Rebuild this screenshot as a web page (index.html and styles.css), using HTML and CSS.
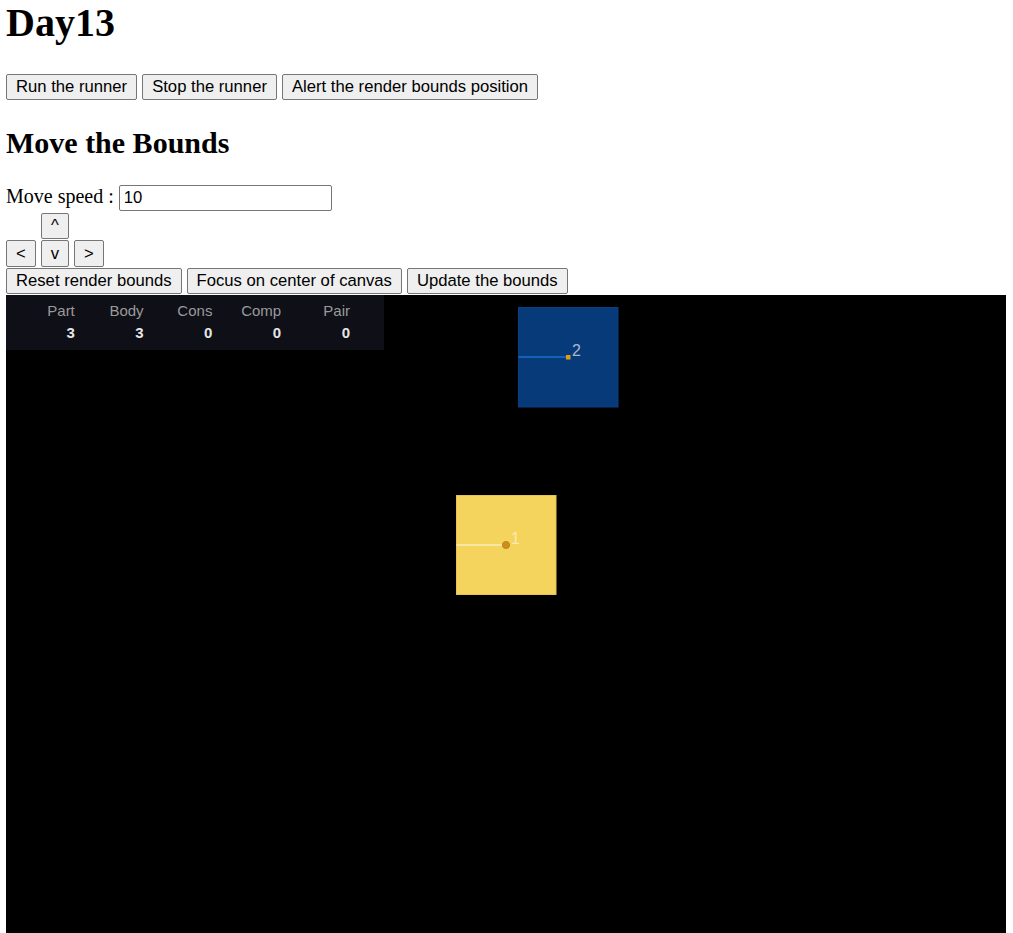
FILE: index.html
```html
<!DOCTYPE html>
<html>
<head>
<meta charset="utf-8">
<title>Day13</title>
<link rel="stylesheet" href="styles.css">
</head>
<body>
<h1 class="title">Day13</h1>
<div class="btn-row top-row">
  <button class="btn">Run the runner</button>
  <button class="btn">Stop the runner</button>
  <button class="btn">Alert the render bounds position</button>
</div>
<h2 class="subtitle">Move the Bounds</h2>
<div class="speed-row">
  <label class="speed-label" for="speed">Move speed :</label>
  <input class="speed-input" id="speed" type="text" value="10">
</div>
<div class="btn-row arrow-row up-row">
  <button class="btn">^</button>
</div>
<div class="btn-row arrow-row">
  <button class="btn">&lt;</button>
  <button class="btn">v</button>
  <button class="btn">&gt;</button>
</div>
<div class="btn-row arrow-row">
  <button class="btn">Reset render bounds</button>
  <button class="btn">Focus on center of canvas</button>
  <button class="btn">Update the bounds</button>
</div>
<div class="canvas">
  <div class="stats">
    <span class="stat-label">Part</span>
    <span class="stat-label">Body</span>
    <span class="stat-label">Cons</span>
    <span class="stat-label">Comp</span>
    <span class="stat-label">Pair</span>
    <span class="stat-value">3</span>
    <span class="stat-value">3</span>
    <span class="stat-value">0</span>
    <span class="stat-value">0</span>
    <span class="stat-value">0</span>
  </div>
  <svg class="world" width="1000" height="638" viewBox="0 0 1000 638">
    <rect x="512.5" y="12.5" width="99.5" height="99.5" fill="#073a79" stroke="#0a3f82" stroke-width="1"/>
    <line x1="512.5" y1="62" x2="562" y2="62" stroke="#1660bc" stroke-width="2"/>
    <rect x="560" y="60" width="4.5" height="4.5" fill="#e29b12"/>
    <text x="566" y="61" class="label-blue">2</text>
    <rect x="450.5" y="200.5" width="99.5" height="99" fill="#f5d45e" stroke="#e6c453" stroke-width="1"/>
    <line x1="450.5" y1="250" x2="500" y2="250" stroke="#f9e6a3" stroke-width="2"/>
    <circle cx="500" cy="250" r="3.6" fill="#d08f12" stroke="#b8892a" stroke-width="1"/>
    <text x="505" y="249" class="label-yellow">1</text>
  </svg>
</div>
</body>
</html>
```
FILE: styles.css
```css
html, body {
  overflow: hidden;
}
body {
  margin: 0 6px;
  font-family: "Liberation Serif", "Times New Roman", serif;
  font-size: 20px;
  color: #000;
  background: #fff;
}
.title {
  font-size: 40px;
  line-height: 46px;
  font-weight: bold;
  margin: 0 0 28px 0;
}
.subtitle {
  font-size: 30px;
  line-height: 35px;
  font-weight: bold;
  margin: 25px 0 25px 0;
}
.btn-row {
  display: flex;
  align-items: flex-start;
  gap: 5px;
}
.top-row {
  height: 26px;
}
.arrow-row {
  height: 27.5px;
}
.up-row {
  padding-left: 35px;
}
.btn {
  height: 26.5px;
  margin: 0;
  padding: 0 9px;
  border: 1px solid #767676;
  border-radius: 2px;
  background: #efefef;
  color: #000;
  font-family: "Liberation Sans", Arial, sans-serif;
  font-size: 16.67px;
  line-height: 19px;
  white-space: nowrap;
}
.top-row .btn {
  height: 26px;
  padding-bottom: 1px;
}
.speed-row {
  display: flex;
  align-items: baseline;
  gap: 5px;
  height: 27.5px;
}
.speed-label {
  line-height: 23px;
}
.speed-input {
  width: 213px;
  height: 26px;
  box-sizing: border-box;
  margin: 0;
  padding: 0 4px;
  border: 1px solid #767676;
  border-radius: 2px;
  font-family: "Liberation Sans", Arial, sans-serif;
  font-size: 16.67px;
  color: #000;
  background: #fff;
}
.canvas {
  position: relative;
  width: 1000px;
  height: 638px;
  background: #000;
}
.stats {
  position: absolute;
  left: 0;
  top: 0;
  width: 378px;
  height: 55px;
  box-sizing: border-box;
  padding-top: 7px;
  background: #0e0f17;
  display: grid;
  grid-template-columns: repeat(5, 68.8px);
  grid-template-rows: 18px 18px;
  row-gap: 4px;
  font-family: "Liberation Sans", Arial, sans-serif;
  font-size: 15px;
  line-height: 18px;
}
.stat-label {
  text-align: right;
  color: #9a9a9c;
}
.stat-value {
  text-align: right;
  color: #e6e6e6;
  font-weight: bold;
}
.world {
  position: absolute;
  left: 0;
  top: 0;
  display: block;
}
.label-blue {
  font-family: "Liberation Sans", Arial, sans-serif;
  font-size: 16px;
  fill: #a9b7cc;
}
.label-yellow {
  font-family: "Liberation Sans", Arial, sans-serif;
  font-size: 16px;
  fill: #fbeab0;
}
```
